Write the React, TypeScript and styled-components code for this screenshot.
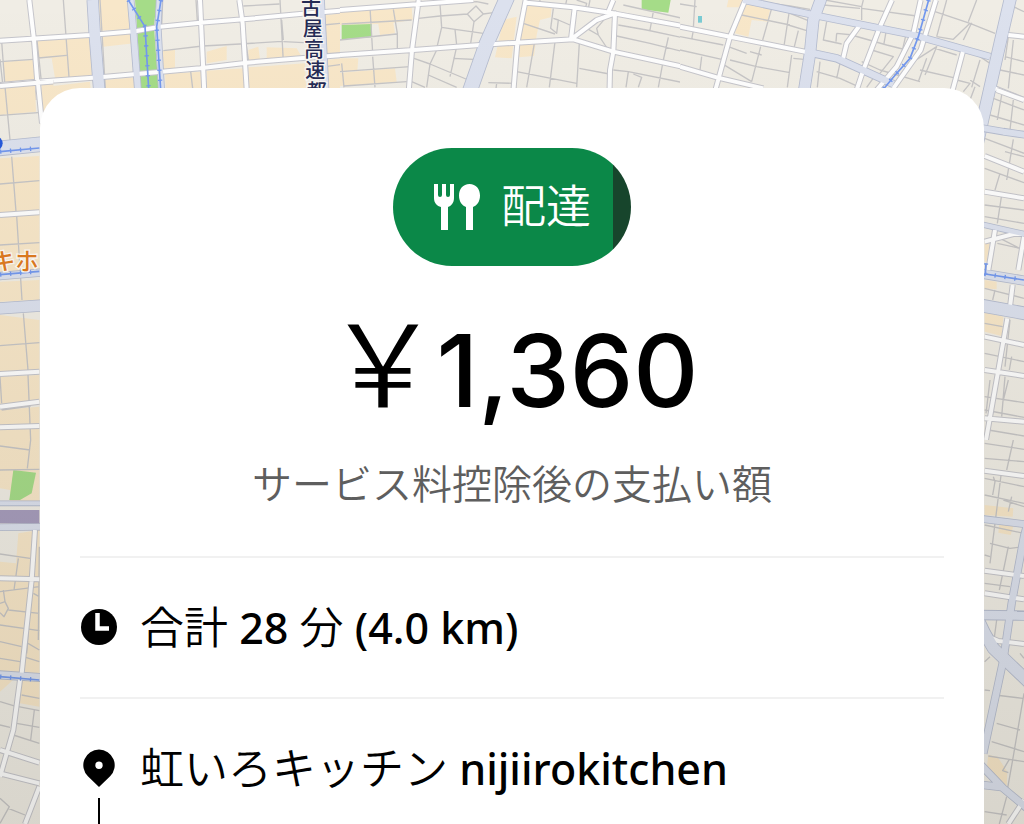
import React from "react";
import styled, { createGlobalStyle } from "styled-components";

const GlobalStyle = createGlobalStyle`
  *, *::before, *::after { box-sizing: border-box; }
  body { margin: 0; background: #f0ece4; }
`;

const japanese = `"Noto Sans CJK JP", sans-serif`;

const Screen = styled.main`
  display: grid;
  height: 100vh;
  grid-template: minmax(0, 1fr) / minmax(0, 1fr);
  overflow: hidden;
  color: #000;
  font-family: "Noto Sans", ${japanese};
`;

const MapCanvas = styled.svg`
  grid-area: 1 / 1;
  width: 100%;
  height: 100%;
`;

const MapLabel = styled.text`
  font-family: ${japanese};
  font-weight: 500;
  paint-order: stroke;
  stroke: #f7f4ef;
  stroke-width: 8px;
`;

const Sheet = styled.section`
  grid-area: 1 / 1;
  z-index: 1;
  display: flex;
  flex-direction: column;
  margin: 88px 40px 0;
  padding: 60px 40px 0;
  border-radius: 40px 40px 0 0;
  background: #fff;
`;

const Summary = styled.header`
  display: flex;
  flex: none;
  flex-direction: column;
  align-items: center;
  padding-bottom: 44px;
`;

const AcceptButton = styled.button`
  display: flex;
  align-items: center;
  gap: 20px;
  height: 118px;
  padding: 0 40px;
  border: 0;
  border-radius: 59px;
  background: linear-gradient(to right, #0b8848 calc(100% - 18px), #17452c 0);
  color: #fff;
  font-family: ${japanese};
  font-size: 45px;
  font-weight: 350;
  line-height: 60px;
`;

const ButtonLabel = styled.span`
  padding-bottom: 6px;
`;

const Price = styled.h1`
  display: flex;
  align-items: baseline;
  height: 128px;
  margin: 34px 0 0;
  font-family: Inter, sans-serif;
  font-size: 101px;
  font-weight: 500;
  line-height: 128px;
`;

const Currency = styled.span`
  margin-right: -4px;
  font-family: ${japanese};
  font-size: 115px;
  font-weight: 350;
  line-height: 1;
`;

const Note = styled.p`
  margin: 24px 0 0;
  color: #5e5e5e;
  font-family: ${japanese};
  font-size: 40px;
  font-weight: 350;
  line-height: 60px;
`;

const Details = styled.ul`
  display: flex;
  flex: 1;
  flex-direction: column;
  margin: 0;
  padding: 0;
  list-style: none;
`;

const Detail = styled.li<{ $grow?: boolean }>`
  display: flex;
  flex: ${(p) => (p.$grow ? "1" : "none")};
  gap: 22px;
  padding-top: 37px;
  min-height: 141px;
  border-top: 2px solid #f1f1f1;
`;

const Marker = styled.div`
  display: flex;
  flex-direction: column;
  align-items: center;
  width: 38px;
  padding-top: 13px;

  svg { flex: none; }
`;

const RouteLine = styled.span`
  flex: 1;
  width: 2px;
  margin-top: 11px;
  background: #000;
`;

const DetailText = styled.span`
  font-size: 43px;
  font-weight: 500;
  line-height: 60px;
  white-space: nowrap;
`;

const Kanji = styled.span`
  font-family: ${japanese};
  font-size: 44px;
  font-weight: 350;
`;

interface Region {
  x: number;
  y: number;
  w: number;
  h: number;
  blocks?: string;
  parks?: string;
  lanes: string;
  streets: string;
  avenues: { d: string; width: number }[];
  rails?: string;
}

const regions: Region[] = [
  {
    x: 0, y: 0, w: 1020, h: 300,
    blocks:
      "M10 185L98 180L105 240L15 250zM20 262L106 256L110 300L20 300zM112 120L270 108L276 228L165 234L155 175L115 175zM295 0L385 0L388 88L300 92zM305 105L400 97L402 130L310 140zM315 240L405 232L410 300L318 300zM488 152L525 150L525 205L490 208zM495 222L604 215L606 300L498 300zM620 155L680 138L680 180L620 190zM620 212L732 205L735 300L622 300zM745 150L775 140L780 178L745 182zM800 142L890 145L905 170L800 176zM745 202L915 190L920 300L748 300zM975 45L1050 38L1050 160L980 165zM980 180L1050 172L1050 300L980 300zM125 262L270 245L275 300L125 300z",
    parks: "M405 0L470 0L462 80L478 300L425 300L412 95z",
    lanes:
      "M190 0L208 245M0 128L270 108M5 125L18 300M0 185L100 178M115 174L200 166M110 112L124 244M265 0L282 265M300 0L316 265M385 0L408 265M490 152L608 138L720 132L845 124M488 0L485 78M588 0L592 62M730 18L838 12M840 0L850 185M850 125L912 128M845 60L850 120M970 75L1020 70M572 215L578 265M976 200L1050 190M470 85L608 74M610 80L612 200M730 70L745 180M0 178L8 250",
    streets:
      "M88 0L102 120L116 300M0 122L270 105L410 93L480 80L600 68L730 58L900 42L1050 30M0 255L110 245L300 232L410 222L600 205L740 188L900 175L1050 163M600 0L614 300M718 0L728 70L742 300",
    avenues: [
      { d: "M278 0L284 100L300 300", width: 32 },
      { d: "M392 0L400 90L416 300", width: 18 },
      { d: "M478 0L474 80L486 300", width: 16 },
      { d: "M960 0L975 300", width: 24 },
    ],
    rails: "M385 0L435 80L448 300M483 0L470 80L484 300",
  },
  {
    x: 1020, y: 0, w: 1020, h: 300,
    blocks:
      "M0 35L215 22L218 60L160 68L165 100L120 105L115 72L0 75zM0 175L55 175L52 212L0 215zM0 218L165 205L170 245L0 258zM560 12L635 20L632 52L600 60L590 105L582 168L535 172L545 75zM490 60L530 50L515 175L465 172z",
    parks: "M5 75L95 72L95 112L5 118zM905 0L992 0L985 38L905 28z",
    lanes:
      "M90 22L98 158M0 120L170 102M5 72L215 60M160 28L172 100L172 145M5 190L12 262M0 215L210 200M98 170L105 262M12 258L200 245M240 15L410 5L445 12M300 12L305 82L290 145M305 82L345 88L430 100M235 55L300 48L382 42L408 18L430 42L402 65L382 42M402 65L392 130M430 42L460 38M345 88L350 135M222 175L270 192L385 240M260 262L270 192L290 150M265 225L350 262M340 175L435 180M350 140L330 230M215 245L255 262M583 130L560 262M645 125L628 262M718 130L710 262M550 70L645 102M640 25L632 85L650 100L655 60L640 55M655 60L690 75M530 215L710 250M445 248L520 250M470 250L468 265M835 75L920 90L1050 118M830 108L930 130L1050 160M940 35L930 90M985 112L970 180L955 262M820 210L865 215L1050 252M865 215L858 262M880 222L905 232L895 262M718 205L808 222M735 82L775 105L805 150M775 105L770 85L800 50M600 0L598 12M680 0L675 22M710 0L740 10L735 28M750 0L745 25M850 15L1050 60",
    streets:
      "M0 30L240 12L400 0M0 165L220 150L420 135L530 128L700 118L820 155L1050 205M560 8L700 22L820 40L1050 82M236 0L216 150L204 300M557 0L532 130L518 300M820 0L805 36M704 25L693 118L770 60L825 40L820 155L810 210L808 300",
    avenues: [{ d: "M515 -40L498 0L440 130L380 300", width: 42 }],
  },
  {
    x: 2040, y: 0, w: 1032, h: 460,
    blocks: "M145 0L190 0L185 22L140 22zM190 12L272 22L262 65L215 60L205 110L165 100z",
    lanes:
      "M45 0L40 85M0 12L50 20M40 92L35 118M0 110L130 135M0 150L125 178M65 170L60 210M145 140L200 160M210 155L245 165M242 140L215 245M150 180L230 200L330 218M125 190L215 245M275 25L248 120M330 40L400 68M325 75L390 95M330 20L312 138M185 45L330 75M355 92L340 152L385 160M340 175L372 178M335 165L322 262M200 0L330 18L390 28M435 0L545 20L550 0M545 20L545 60M430 15L540 25M545 25L710 48M440 65L430 120L485 132M470 100L520 105M470 100L468 125M525 108L620 135L680 150M620 85L612 130M680 95L665 160M545 185L600 210L720 245M575 150L640 170L600 220M420 185L412 262M410 215L480 235L540 262M480 190L470 235M590 220L560 262M765 35L870 70L945 100M870 70L820 118L770 110M800 0L770 110M875 68L850 120M890 0L865 65M700 185L770 140L735 225M765 145L830 165M720 210L830 235M740 175L715 245M830 240L870 250L850 275M870 150L930 190M900 180L875 262M985 110L975 180M1000 20L1032 35M975 170L1032 185M1000 120L985 265M960 210L1032 225",
    streets:
      "M0 80L150 110L390 158M0 200L110 232L250 265M196 0L150 110L98 300M540 75L500 130L487 185M636 0L600 80L550 210L520 300M722 0L700 100L650 200L590 270M768 0L722 150L640 265M850 150L810 300M985 105L1032 110M945 265L1032 300",
    avenues: [
      { d: "M190 0L400 45L700 105L930 170", width: 18 },
      { d: "M400 160L470 175L640 252", width: 20 },
      { d: "M426 -40L422 0L400 60L390 160L368 300", width: 32 },
      { d: "M1000 -40L990 0L960 130L890 440", width: 34 },
    ],
    rails: "M746 0L715 110L690 175L650 220L600 280",
  },
  {
    x: 0, y: 240, w: 160, h: 1080,
    blocks:
      "M0 20L105 12L108 95L0 105zM125 12L200 5L200 60L125 110zM0 235L118 228L118 390L0 400zM0 410L118 402L118 590L0 600zM0 605L118 600L118 660L0 665zM0 705L118 720L118 870L0 880zM0 890L118 885L118 965L0 975zM0 990L118 980L118 1030L0 1040zM0 1050L118 1045L118 1080L0 1080z",
    lanes:
      "M15 20L30 180M0 106L115 98M35 230L48 395M0 312L118 302M50 408L66 660M0 495L118 488M70 700L84 870M0 797L118 788M84 885L92 1080M0 1098L90 1112M0 890L5 970M5 990L92 978",
    streets: "M0 18L112 8L200 2M113 0L126 130M0 405L118 397M0 882L118 875M0 980L118 965M0 1042L118 1038",
    avenues: [
      { d: "M-10 206L130 192", width: 42 },
      { d: "M-10 589L130 577", width: 20 },
      { d: "M-10 686L130 676", width: 32 },
    ],
    rails: "M0 215L118 204M0 584L118 574",
  },
  {
    x: 0, y: 1320, w: 160, h: 1152,
    blocks:
      "M0 0L118 0L118 185L30 185L30 150L0 145zM55 280L118 270L118 800L60 790L62 700L0 755L0 365L48 370z",
    parks: "M40 90L108 98L95 160L60 180L28 180z",
    lanes:
      "M92 0L82 85M0 18L90 30M0 90L118 88M0 342L90 355M55 355L42 450M0 455L118 440M10 450L15 485L25 505L12 530L0 518M25 510L118 520M0 490L15 485M0 555L118 572M0 605L65 620M75 605L118 630M100 460L118 470M85 570L80 640M70 650L118 665M0 655L60 665M65 765L118 775M55 800L118 812M0 785L50 800M103 810L92 900M50 850L118 862M0 855L30 862M40 885L118 910M0 1075L28 1100L0 1150M25 1105L75 1125M118 320L115 600M0 1010L20 960",
    streets:
      "M105 270L95 420L65 700M60 720L40 870L0 1010M0 415L118 418M0 930L118 968M0 1000L118 1030M118 1040L75 1152",
    avenues: [
      { d: "M-10 190L130 190", width: 12 },
      { d: "M-10 262L130 260", width: 18 },
      { d: "M-10 704L130 713", width: 22 },
    ],
    rails: "M0 710L118 720",
  },
  {
    x: 2910, y: 240, w: 162, h: 1080,
    blocks: "M44 490L60 490L50 545L44 545zM44 600L80 605L80 628L44 625zM44 695L100 710L95 768L44 755z",
    lanes:
      "M70 55L162 90M95 45L82 120M130 60L120 150M60 105L162 135M44 175L162 220M130 178L110 300M105 215L162 230M44 265L162 308M90 280L75 330M44 375L162 390M95 345L82 430M44 410L162 430M80 470L162 512M82 490L150 505M75 630L68 660M44 625L162 655M44 730L98 740M120 720L105 860M44 820L162 845M125 830L118 870M44 950L162 968M105 890L95 1010M44 990L162 1012M60 900L48 1000M55 1050L162 1068M44 1080L162 1100M115 900L100 960M0 0L30 20M15 20L0 60",
    streets:
      "M80 30L162 60M44 228L162 275M44 335L162 355M44 485L130 462L162 462M75 450L55 570M162 470L145 570M128 615L120 680M44 770L162 795M112 715L85 870L48 1080M44 870L162 888M44 1015L162 1025",
    avenues: [
      { d: "M30 143L100 155L175 166", width: 18 },
      { d: "M30 432L175 465", width: 14 },
      { d: "M30 580L175 604", width: 26 },
      { d: "M30 676L175 702", width: 36 },
    ],
    rails: "M48 550L46 582L162 600",
  },
  {
    x: 2910, y: 1320, w: 162, h: 1152,
    blocks: "M44 195L130 205L128 230L44 225zM88 250L130 258L122 285L85 278zM55 945L82 950L112 995L110 1040L50 985z",
    lanes:
      "M130 0L110 90M44 10L162 28M44 55L162 65M70 110L75 125L68 165M44 115L162 140M44 165L162 190M95 90L60 370M125 170L115 215M100 180L162 200M44 255L162 280M60 310L120 325L162 320M115 320L88 450M44 345L60 350M44 430L120 440M80 540L72 600M44 750L60 752M75 765L158 775M80 850L150 870M162 760L128 960L110 1060M65 905L162 935M55 948L118 958L162 965M118 958L98 992L115 998M44 1115L110 1125M60 650L44 665M110 1070L88 1152M150 640L162 655",
    streets: "M44 92L162 108M44 392L162 408M44 460L162 478M60 600L162 612M162 1080L115 1152M44 585L90 605",
    avenues: [
      { d: "M30 236L175 254", width: 18 },
      { d: "M170 260L162 290L125 490L100 660L40 940", width: 20 },
      { d: "M30 525L175 527", width: 26 },
      { d: "M20 530L44 580L70 625L185 735", width: 34 },
      { d: "M30 1034L100 1042M30 972L100 1045L175 1108", width: 20 },
    ],
  },
];

function StreetMap() {
  return (
    <MapCanvas viewBox="0 0 3072 2472" preserveAspectRatio="xMidYMin slice" aria-hidden="true">
      <defs>
        <linearGradient id="shade" x1="0" y1="0" x2="0" y2="1">
          <stop offset="0" stopColor="#3c3828" stopOpacity="0" />
          <stop offset="1" stopColor="#3c3828" stopOpacity="0.13" />
        </linearGradient>
      </defs>
      <rect width="3072" height="2472" fill="#f0ede5" />
      {regions.map((r, i) => (
        <svg key={i} x={r.x} y={r.y} width={r.w} height={r.h} viewBox={`0 0 ${r.w} ${r.h}`} fill="none" strokeLinejoin="round">
          <path d={r.blocks} fill="#f8e7c9" />
          <path d={r.parks} fill="#a5dc88" />
          <path d={r.lanes} stroke="#c6c5c6" strokeWidth="4" />
          <path d={r.streets} stroke="#c5c5cb" strokeWidth="18" />
          {r.avenues.map((a) => (
            <path key={a.d} d={a.d} stroke="#b5bccf" strokeWidth={a.width + 5} />
          ))}
          <path d={r.streets} stroke="#fefefe" strokeWidth="12" />
          {r.avenues.map((a) => (
            <path key={a.d} d={a.d} stroke="#dce1ee" strokeWidth={a.width} />
          ))}
          <path d={r.rails} stroke="#7398ee" strokeWidth="5" />
          <path d={r.rails} stroke="#7398ee" strokeWidth="13" strokeDasharray="4 26" />
        </svg>
      ))}
      <path d="M0 1530H118V1570H0z" fill="#a69cbd" />
      <circle cx="-14" cy="430" r="22" fill="#2458dc" />
      <path d="M2094 48h12v20h-12z" fill="#7acbd3" />
      <rect width="3072" height="2472" fill="url(#shade)" />
      <MapLabel x="903 908 912 916 920" y="44 107 170 234 297" fontSize="60" fill="#252b55">
        古屋高速都
      </MapLabel>
      <MapLabel x="-24" y="810" fontSize="70" fill="#d9781f">
        キホ
      </MapLabel>
    </MapCanvas>
  );
}

const UtensilsIcon = () => (
  <svg width="48" height="48" viewBox="0 0 48 48" fill="#fff" aria-hidden="true">
    <path d="M1 1h4v11q0 2 2 2t2-2V1h4v11q0 2 2 2t2-2V1h4v14c0 5-3 8-6 9v23H8V24c-4-1-7-4-7-9z" />
    <path d="M36.500 1C43 1 47 6 47 12.500c0 6-3 10-7 11.500v23h-7V24c-4-1.500-7-5.500-7-11.500C26 6 30 1 36.500 1z" />
  </svg>
);

const ClockIcon = () => (
  <svg width="38" height="38" viewBox="0 0 38 38" aria-hidden="true">
    <circle cx="19" cy="19" r="18" />
    <path d="M17.500 5v15.500H29" fill="none" stroke="#fff" strokeWidth="4.500" />
  </svg>
);

const PinIcon = () => (
  <svg width="38" height="38" viewBox="0 0 38 38" aria-hidden="true">
    <path
      fillRule="evenodd"
      d="M19 0.500A15.700 15.700 0 0 0 7.900 27.300L19 38l11.100-10.700A15.700 15.700 0 0 0 19 0.500zM19 12.500a3.700 3.700 0 1 1 0 7.400a3.700 3.700 0 0 1 0-7.400z"
    />
  </svg>
);

export default function App() {
  return (
    <Screen lang="ja">
      <GlobalStyle />
      <StreetMap />
      <Sheet>
        <Summary>
          <AcceptButton type="button">
            <UtensilsIcon />
            <ButtonLabel>配達</ButtonLabel>
          </AcceptButton>
          <Price>
            <Currency>￥</Currency>1,360
          </Price>
          <Note>サービス料控除後の支払い額</Note>
        </Summary>
        <Details>
          <Detail>
            <Marker>
              <ClockIcon />
            </Marker>
            <DetailText>
              <Kanji>合計</Kanji> 28 <Kanji>分</Kanji> (4.0 km)
            </DetailText>
          </Detail>
          <Detail $grow>
            <Marker>
              <PinIcon />
              <RouteLine />
            </Marker>
            <DetailText>
              <Kanji>虹いろキッチン</Kanji> nijiirokitchen
            </DetailText>
          </Detail>
        </Details>
      </Sheet>
    </Screen>
  );
}
